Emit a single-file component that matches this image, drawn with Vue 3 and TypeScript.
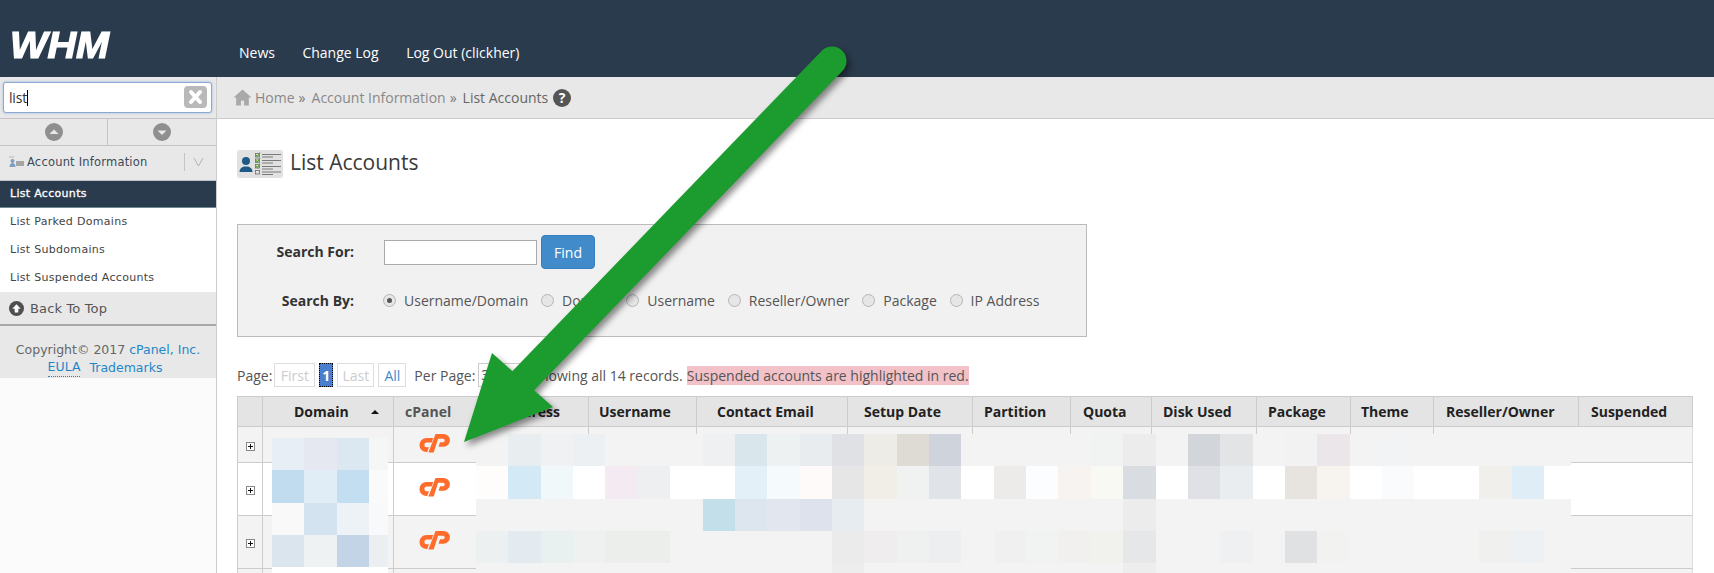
<script setup lang="ts">
const nav = ['News', 'Change Log', 'Log Out (clickher)']
const radios = [
  { label: 'Username/Domain', on: true },
  { label: 'Domain', on: false },
  { label: 'Username', on: false },
  { label: 'Reseller/Owner', on: false },
  { label: 'Package', on: false },
  { label: 'IP Address', on: false }
]
const cols = [
  { t: '', w: 25, p: 0 }, { t: 'Domain', w: 131, p: 31 }, { t: 'cPanel', w: 85, p: 11 }, { t: 'IP Address', w: 110, p: 8 },
  { t: 'Username', w: 108, p: 10 }, { t: 'Contact Email', w: 151, p: 20 }, { t: 'Setup Date', w: 125, p: 16 },
  { t: 'Partition', w: 98, p: 11 }, { t: 'Quota', w: 81, p: 12 }, { t: 'Disk Used', w: 105, p: 11 },
  { t: 'Package', w: 94, p: 11 }, { t: 'Theme', w: 83, p: 10 }, { t: 'Reseller/Owner', w: 145, p: 12 }, { t: 'Suspended', w: 114, p: 12 }
]
const rows = [36, 53, 53, 53]
const domainCells = [
  '#e7eef5', '#e5e8f0', '#dbe8f2', '#f5f7f7',
  '#c1dcef', '#e0edf6', '#c3ddf1', '#fafafa',
  '#f9f9f9', '#d4e3f0', '#edf2f7', '#f8f9fa',
  '#dbe5ee', '#eef2f3', '#c4d4e7', '#ebeff2',
  '#ffffff', '#ffffff', '#ffffff', '#ffffff'
]
const F = '#f3f3f3'
const W = '#ffffff'
const blurRows: { base: string; c: Record<number, string> }[] = [
  { base: F, c: { 1: '#e8eef0', 2: '#f0f1f2', 3: '#ecf0f2', 7: '#eff0f1', 8: '#d9e6ec', 9: '#eef1f2', 10: '#e9ecee', 11: '#dfe1e5', 12: '#eeece7', 13: '#dedbd5', 14: '#cfd3dc', 19: '#f1f3f2', 20: '#ececec', 22: '#d2d6da', 23: '#e2e4e6', 25: '#f1f2f1', 26: '#ebe6ea', 28: '#f2f3f4' } },
  { base: W, c: { 0: '#fffdfc', 1: '#d3e9f5', 2: '#f1f8fa', 4: '#f4ebf2', 5: '#eeeff0', 8: '#e3f0f8', 9: '#f5fafc', 10: '#fffafa', 11: '#e6e6e6', 12: '#f1eee8', 13: '#eff2f0', 14: '#e0e4e8', 16: '#ecebe9', 17: '#fbfdff', 18: '#f6f3f0', 19: '#f9f9f3', 20: '#d9dde1', 22: '#dfe1e6', 23: '#e9edf0', 25: '#e7e4df', 26: '#f7f3ef', 28: '#fafbfd', 31: '#f1efeb', 32: '#deedf6' } },
  { base: F, c: { 7: '#c3dfea', 8: '#dde5ee', 9: '#e1e6ef', 10: '#dde2ec', 11: '#e6ecef', 20: '#ececec' } },
  { base: F, c: { 0: '#edf0f1', 1: '#e3ebf1', 2: '#e9f0f0', 3: '#eff1f1', 4: '#eceeec', 5: '#eceeec', 11: '#ebebeb', 12: '#efeded', 13: '#eff1f0', 14: '#edeeef', 16: '#f0f0f0', 17: '#f1f3f2', 18: '#f1f0ee', 19: '#f1f1ee', 20: '#e5e7e8', 23: '#eef0f2', 25: '#e0e1e2', 26: '#f2f2f0', 31: '#f0f0ee', 32: '#edf1f4' } },
  { base: F, c: { 11: '#ededed', 20: '#ededed' } }
]
const blurCells: string[] = []
for (const r of blurRows) {
  for (let i = 0; i < 34; i++) blurCells.push(r.c[i] ?? r.base)
}
</script>

<template>
  <div class="page">
    <header class="top">
      <div class="logo"><span class="logo-t">WHM</span></div>
      <nav class="nav">
        <span v-for="n in nav" :key="n">{{ n }}</span>
      </nav>
    </header>

    <div class="body">
      <aside class="side">
        <div class="side-search">
          <div class="side-input">
            <span class="typed">list</span><i class="caret"></i>
            <span class="clear">
              <svg width="23" height="22" viewBox="0 0 23 22"><path d="M7 6l9 10M16 6l-9 10" stroke="#fff" stroke-width="4" stroke-linecap="round" /></svg>
            </span>
          </div>
        </div>
        <div class="updown">
          <div class="ud ud1">
            <svg width="18" height="18" viewBox="0 0 18 18"><circle cx="9" cy="9" r="9" fill="#8f8f8f" /><path d="M4.500 11L9 6.500l4.500 4.500z" fill="#e8e8e8" /></svg>
          </div>
          <div class="ud">
            <svg width="18" height="18" viewBox="0 0 18 18"><circle cx="9" cy="9" r="9" fill="#8f8f8f" /><path d="M4.500 7.500L9 12l4.500-4.500z" fill="#e8e8e8" /></svg>
          </div>
        </div>
        <div class="cat">
          <svg class="cat-ic" width="15" height="12" viewBox="0 0 15 12">
            <rect x="0" y="0" width="5" height="2" fill="#cfcfcf" />
            <circle cx="3.500" cy="5" r="2" fill="#7f9fc0" />
            <path d="M0.500 11c0-3 1.500-4 3-4s3 1 3 4z" fill="#7f9fc0" />
            <rect x="7" y="5" width="8" height="5" fill="#a5a5a5" />
          </svg>
          <span class="cat-t">Account Information</span>
          <span class="cat-sep"></span>
          <svg class="cat-v" width="11" height="10" viewBox="0 0 11 10"><path d="M1 1l4.500 8L10 1" fill="none" stroke="#b5b5b5" /></svg>
        </div>
        <div class="item active">List Accounts</div>
        <div class="item">List Parked Domains</div>
        <div class="item">List Subdomains</div>
        <div class="item">List Suspended Accounts</div>
        <div class="back">
          <svg width="15" height="15" viewBox="0 0 15 15"><circle cx="7.500" cy="7.500" r="7.500" fill="#4f4f4f" /><path d="M3.300 7.800L7.500 3.300l4.200 4.500H9.300v3.700H5.700V7.800z" fill="#fff" /></svg>
          <span>Back To Top</span>
        </div>
        <div class="copy">
          <div>Copyright© 2017 <span class="lnk">cPanel, Inc.</span></div>
          <div class="copy2"><span class="lnk eula">EULA</span><span class="lnk">Trademarks</span></div>
        </div>
      </aside>

      <main class="main">
        <div class="crumbs">
          <svg class="home" width="19" height="17" viewBox="0 0 18 16">
            <path d="M9 0.500L0.500 8h2.500v7.500h4.500V11h3v4.500H15V8h2.500z" fill="#a9a9a9" />
          </svg>
          <span class="c1">Home</span><span class="c-sep">»</span>
          <span class="c1">Account Information</span><span class="c-sep">»</span>
          <span class="c2">List Accounts</span>
          <svg class="help" width="18" height="18" viewBox="0 0 18 18">
            <circle cx="9" cy="9" r="9" fill="#555" />
            <text x="9" y="14" text-anchor="middle" font-size="14" font-weight="700" font-family="Open Sans" fill="#fff">?</text>
          </svg>
        </div>

        <div class="content">
          <div class="title">
            <svg class="title-ic" width="46" height="28" viewBox="0 0 46 28">
              <rect width="46" height="28" rx="3" fill="#e1e1e1" />
              <circle cx="9" cy="11" r="4" fill="#1f5a85" />
              <path d="M2.500 22c0-4 3-5 4.500-5.500h4c1.500 0.500 4.500 1.500 4.500 5.500z" fill="#1f5a85" />
              <g fill="none" stroke="#6d6d6d" stroke-width="0.800">
                <rect x="18.500" y="3.500" width="4" height="3.500" />
                <rect x="18.500" y="9" width="4" height="3.500" />
                <rect x="18.500" y="14.500" width="4" height="3.500" />
                <rect x="18.500" y="20.500" width="4" height="3.500" />
              </g>
              <g fill="none" stroke="#5fa53c" stroke-width="1.200">
                <path d="M19 5l1.500 1.500L23 2.500" />
                <path d="M19 10.500l1.500 1.500L23 8" />
                <path d="M19 16l1.500 1.500L23 13.500" />
              </g>
              <g stroke="#7a7a7a" stroke-width="1.200">
                <path d="M25 4.500h19M25 7h11M25 10.500h19M25 13h11M25 16.500h19M25 19h11M25 22h19M25 24.500h11" />
              </g>
            </svg>
            <h1>List Accounts</h1>
          </div>

          <section class="search">
            <div class="sr">
              <label class="lab">Search For:</label>
              <span class="inp"></span>
              <span class="find">Find</span>
            </div>
            <div class="sr sr2">
              <label class="lab">Search By:</label>
              <div class="radios">
                <span v-for="r in radios" :key="r.label" class="radio">
                  <i class="dot" :class="{ on: r.on }"></i>{{ r.label }}
                </span>
              </div>
            </div>
          </section>

          <div class="pager">
            <span>Page:</span>
            <span class="pg off pg-first">First</span>
            <span class="pg cur">1</span>
            <span class="pg off pg-last">Last</span>
            <span class="pg all">All</span>
            <span class="pp">Per Page:</span>
            <span class="sel">30</span>
            <span class="showing">Showing all 14 records.</span>
            <span class="red">Suspended accounts are highlighted in red.</span>
          </div>

          <div class="table-wrap">
            <table class="tbl">
              <colgroup><col v-for="c in cols" :key="c.t" :style="{ width: c.w + 'px' }" /></colgroup>
              <thead>
                <tr>
                  <th v-for="c in cols" :key="c.t" :class="{ cp: c.t === 'cPanel' }" :style="{ paddingLeft: c.p + 'px' }">
                    {{ c.t }}<i v-if="c.t === 'Domain'" class="sort"></i>
                  </th>
                </tr>
              </thead>
              <tbody>
                <tr v-for="(h, i) in rows" :key="i" :class="{ odd: i !== 1 }" :style="{ height: h + 'px' }">
                  <td class="exp"><span class="plus"></span></td>
                  <td></td>
                  <td class="cpc">
                    <svg class="cplogo" width="32" height="20" viewBox="0 0 30 18">
                      <path d="M13.200 4.300H7a6.500 6.500 0 0 0 0 13.200h0.800L9.300 13H7.200a2.200 2.200 0 0 1 0-4.400h4.800z" fill="#ff6c2c" />
                      <path d="M15.500 0.500H23a6 6 0 0 1 0 12h-4.700L19.700 8.200h2.800a1.600 1.600 0 0 0 0-3.200h-4.600L13.800 17.800H8.800z" fill="#ff6c2c" />
                    </svg>
                  </td>
                  <td v-for="n in 11" :key="n"></td>
                </tr>
              </tbody>
            </table>
            <div class="blur-dom">
              <i v-for="(c, i) in domainCells" :key="i" :style="{ background: c }"></i>
            </div>
            <div class="blur-main">
              <i v-for="(c, i) in blurCells" :key="i" :style="{ background: c }"></i>
            </div>
          </div>
        </div>
      </main>
    </div>

    <svg class="arrow" width="1714" height="573" viewBox="0 0 1714 573">
      <path d="M832 61L522 382" stroke="#1c9c2e" stroke-width="29" stroke-linecap="round" fill="none" />
      <path d="M492 353L553 407L464 442z" fill="#1c9c2e" />
    </svg>
  </div>
</template>

<style scoped>
.page {
  position: relative;
  width: 1714px;
  height: 573px;
  overflow: hidden;
  background: #fff;
  font-family: "Open Sans", sans-serif;
  color: #333;
}
.top {
  height: 77px;
  background: #2a3b4d;
  display: flex;
}
.logo {
  width: 239px;
  padding: 26px 0 0 10px;
  box-sizing: border-box;
  color: #fff;
  font: italic 700 36px/40px "Liberation Sans", sans-serif;
}
.logo-t {
  display: inline-block;
  transform: scaleX(1.100);
  transform-origin: left center;
  -webkit-text-stroke: 1.200px #fff;
}
.nav {
  display: flex;
  gap: 27.500px;
  padding-top: 43px;
  color: #fff;
  font-size: 14px;
  line-height: 20px;
}
.body {
  display: flex;
  height: 496px;
}
.side {
  width: 217px;
  flex: none;
  box-sizing: border-box;
  border-right: 1px solid #ccc;
  background: #fbfbfb;
  font-family: "DejaVu Sans", sans-serif;
  font-size: 11px;
  color: #444;
}
.side-search {
  height: 41px;
  box-sizing: border-box;
  padding: 5px 4px 0 3px;
  background: #e8e8e8;
}
.side-input {
  height: 31px;
  box-sizing: border-box;
  background: #fff;
  border: 1px solid #8aa8d2;
  border-radius: 3px;
  box-shadow: 0 0 3px #9db9e0;
  display: flex;
  align-items: center;
  padding-left: 5px;
  position: relative;
  font: 14px "Open Sans", sans-serif;
  color: #333;
}
.typed { letter-spacing: -0.200px; }
.caret {
  display: block;
  width: 1px;
  height: 16px;
  background: #000;
}
.clear {
  position: absolute;
  right: 4px;
  top: 3px;
  width: 23px;
  height: 22px;
  background: #b9b9b9;
  border-radius: 4px;
  display: flex;
}
.updown {
  height: 28px;
  box-sizing: border-box;
  background: #e8e8e8;
  display: flex;
  border-top: 1px solid #c4c4c4;
  border-bottom: 1px solid #c4c4c4;
}
.ud {
  flex: 1;
  display: flex;
  align-items: center;
  justify-content: center;
}
.ud1 { flex: none; width: 107px; }
.ud + .ud { border-left: 1px solid #c4c4c4; }
.cat {
  height: 35px;
  box-sizing: border-box;
  background: #e8e8e8;
  border-bottom: 1px solid #bcc5c9;
  padding-bottom: 2px;
  display: flex;
  align-items: center;
  padding-left: 9px;
  color: #3d4a58;
  font-size: 11.500px;
}
.cat-t { margin-left: 3px; width: 157px; letter-spacing: 0.200px; white-space: nowrap; }
.cat-sep { width: 1px; height: 18px; background: #c4c4c4; }
.cat-v { margin-left: 8px; }
.item {
  height: 28px;
  line-height: 28px;
  padding-left: 10px;
  background: #fff;
  letter-spacing: 0.300px;
}
.item.active {
  height: 26px;
  line-height: 26px;
  background: #2a3b4d;
  color: #fff;
  -webkit-text-stroke: 0.300px #fff;
  border-bottom: 1px solid #6f8a90;
}
.back {
  height: 34px;
  box-sizing: border-box;
  background: #e8e8e8;
  border-bottom: 2px solid #a9a9a9;
  display: flex;
  align-items: center;
  gap: 6px;
  padding-left: 9px;
  font-size: 13px;
  color: #555;
  letter-spacing: 0.150px;
}
.copy {
  height: 52px;
  box-sizing: border-box;
  background: #e8e8e8;
  text-align: center;
  padding-top: 15px;
  color: #666;
  font-size: 12.500px;
  line-height: 18px;
}
.copy2 { display: flex; justify-content: center; gap: 9px; padding-right: 6px; }
.lnk { color: #1f87c9; }
.eula { border-bottom: 1px dotted #1f87c9; line-height: 16px; height: 17px; }
.main { flex: 1; min-width: 0; }
.crumbs {
  height: 42px;
  box-sizing: border-box;
  background: #e8e8e8;
  border-bottom: 1px solid #ccc;
  display: flex;
  align-items: center;
  padding-left: 16px;
  font-size: 14px;
  color: #888;
}
.home { margin-right: 3px; }
.c-sep { margin: 0 6px 0 4px; color: #777; }
.c2 { color: #666; }
.help { margin-left: 5px; }
.content { padding-left: 20px; }
.title {
  display: flex;
  align-items: center;
  gap: 7px;
  margin-top: 31px;
  height: 28px;
}
.title h1 {
  margin: -4px 0 0;
  font-size: 21px;
  font-weight: 400;
  color: #3a3a3a;
  line-height: 28px;
}
.search {
  margin-top: 46px;
  width: 850px;
  height: 113px;
  box-sizing: border-box;
  background: #f1f1f1;
  border: 1px solid #bbb;
}
.sr {
  display: flex;
  align-items: center;
  height: 34px;
  margin-top: 10px;
}
.sr2 { margin-top: 15px; }
.lab {
  width: 116px;
  margin-top: -2px;
  text-align: right;
  font-size: 14px;
  font-weight: 700;
  color: #333;
}
.inp {
  width: 153px;
  height: 25px;
  box-sizing: border-box;
  margin-left: 30px;
  background: #fff;
  border: 1px solid #aaa;
}
.find {
  margin-left: 4px;
  width: 54px;
  height: 34px;
  box-sizing: border-box;
  background: #428bca;
  border: 1px solid #357ebd;
  border-radius: 4px;
  color: #fff;
  font-size: 14px;
  display: flex;
  align-items: center;
  justify-content: center;
}
.radios {
  display: flex;
  margin: -2px 0 0 29px;
  font-size: 14px;
  color: #555;
}
.radio { display: flex; align-items: center; margin-right: 12.800px; }
.dot {
  display: block;
  width: 11px;
  height: 11px;
  margin-right: 8px;
  border: 1px solid #b5b5b5;
  border-radius: 50%;
  background: #e6e6e6;
  position: relative;
}
.dot.on::after {
  content: "";
  position: absolute;
  left: 3px;
  top: 3px;
  width: 5px;
  height: 5px;
  border-radius: 50%;
  background: #555;
}
.pager {
  margin-top: 26px;
  height: 24px;
  display: flex;
  align-items: center;
  font-size: 14px;
  color: #555;
}
.pg {
  height: 24px;
  box-sizing: border-box;
  display: flex;
  align-items: center;
  justify-content: center;
  border: 1px solid #ddd;
  background: #fff;
}
.pg-first { width: 41px; margin-left: 2px; }
.pg-last { width: 37px; margin-left: 4px; }
.off { color: #ccc; }
.cur {
  width: 14px;
  margin-left: 4px;
  background: #4a7fd0;
  color: #fff;
  font-weight: 700;
  border: 1px dotted #000;
}
.all { width: 28px; margin-left: 4px; color: #428bca; }
.pp { margin-left: 8px; }
.sel {
  width: 42px;
  height: 24px;
  box-sizing: border-box;
  margin-left: 3px;
  border: 1px solid #ccc;
  background: #fff;
  padding-left: 2px;
  line-height: 22px;
}
.showing { margin-left: 12px; }
.red {
  margin-left: 4px;
  height: 19px;
  line-height: 19px;
  background: #f2c2c8;
  color: #555;
}
.table-wrap {
  position: relative;
  margin-top: 9px;
  width: 1455px;
}
.tbl {
  table-layout: fixed;
  border-collapse: collapse;
  width: 1455px;
  font-size: 14px;
}
.tbl th {
  height: 30px;
  box-sizing: border-box;
  padding: 0;
  background: #e4e4e4;
  border: 1px solid #ccc;
  color: #222;
  font-weight: 700;
  position: relative;
  text-align: left;
  white-space: nowrap;
}
.tbl th.cp { color: #555; }
.sort {
  position: absolute;
  right: 14px;
  top: 13px;
  width: 0;
  height: 0;
  border: 4px solid transparent;
  border-top: 0;
  border-bottom: 4px solid #111;
}
.tbl td {
  padding: 0;
  border-top: 1px solid #ccc;
  border-bottom: 1px solid #ccc;
  background: #fff;
}
.tbl tr.odd td { background: #f3f3f3; }
.tbl td:nth-child(1) { border-left: 1px solid #ccc; }
.tbl td:nth-child(n+2):not(:last-child) { border-left: 1px solid #ccc; }
.tbl td:nth-child(3) { border-right: 1px solid #ccc; }
.tbl td:last-child { border-right: 1px solid #ddd; }
.exp { text-align: center; vertical-align: middle; }
.plus {
  display: inline-block;
  width: 9px;
  height: 9px;
  box-sizing: border-box;
  border: 1px solid #888;
  background:
    linear-gradient(#111, #111) center / 5px 1px no-repeat,
    linear-gradient(#111, #111) center / 1px 5px no-repeat,
    #fff;
  vertical-align: middle;
}
.cpc { vertical-align: middle; }
.cplogo { display: block; margin: -4px 0 0 25px; }
.blur-dom {
  position: absolute;
  left: 35px;
  top: 42px;
  display: grid;
  grid-template-columns: 32px 33px 32px 19px;
  grid-auto-rows: 32.300px;
}
.blur-main {
  position: absolute;
  left: 239px;
  top: 38px;
  display: grid;
  grid-template-columns: repeat(33, 32.370px) 27px;
  grid-auto-rows: 32.300px;
}
.blur-dom i,
.blur-main i { display: block; }
.arrow {
  position: absolute;
  left: 0;
  top: 0;
  pointer-events: none;
  filter: drop-shadow(3px 4px 3px rgba(0, 0, 0, 0.45));
}
</style>
